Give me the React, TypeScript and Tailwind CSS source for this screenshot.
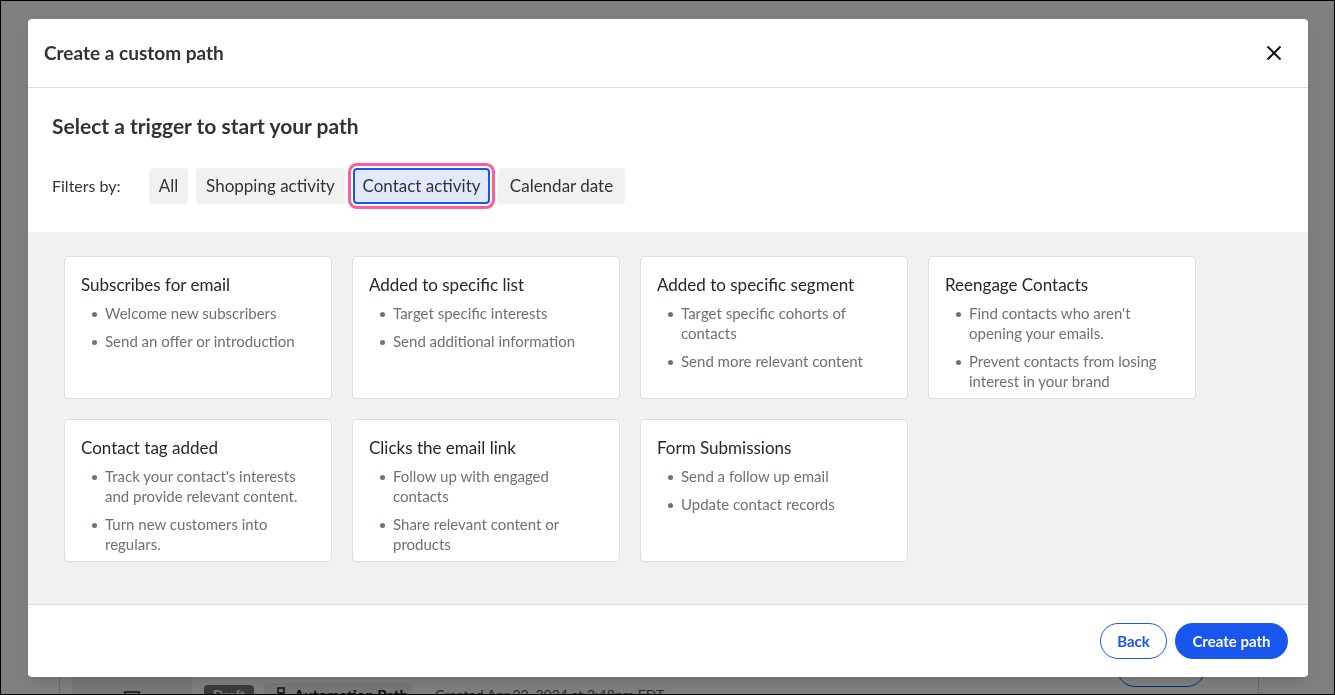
import React from 'react'

const filters = [
    { label: 'All', width: 'min-w-[39px]' },
    { label: 'Shopping activity', width: 'min-w-[149px]' },
    { label: 'Contact activity', width: 'min-w-[137px]' },
    { label: 'Calendar date', width: 'min-w-[127px]' },
]

const triggers = [
    {
        title: 'Subscribes for email',
        points: ['Welcome new subscribers', 'Send an offer or introduction'],
    },
    {
        title: 'Added to specific list',
        points: ['Target specific interests', 'Send additional information'],
    },
    {
        title: 'Added to specific segment',
        points: ['Target specific cohorts of contacts', 'Send more relevant content'],
    },
    {
        title: 'Reengage Contacts',
        points: ["Find contacts who aren't opening your emails.", 'Prevent contacts from losing interest in your brand'],
    },
    {
        title: 'Contact tag added',
        points: ["Track your contact's interests and provide relevant content.", 'Turn new customers into regulars.'],
    },
    {
        title: 'Clicks the email link',
        points: ['Follow up with engaged contacts', 'Share relevant content or products'],
    },
    {
        title: 'Form Submissions',
        points: ['Send a follow up email', 'Update contact records'],
    },
]

function CampaignRow() {
    return (
        <div className="-mb-3 ml-[59px] mr-[76px] flex h-20 items-end border-x border-gray-300 pl-3">
            <div className="flex h-20 w-[120px] items-end justify-center bg-[#f1f1f1]">
                <svg className="h-4 w-4" viewBox="0 0 16 16" fill="none" stroke="#555" strokeWidth="2">
                    <path d="M1 1h14v14H1zM1 4h14" />
                </svg>
            </div>
            <div className="ml-3 flex items-center gap-2.5 text-sm text-[#555]">
                <span className="w-[50px] rounded bg-[#777] text-center leading-5 font-bold text-white">Draft</span>
                <span className="flex w-[148px] items-center gap-2 rounded bg-[#f1f1f1] pl-3 text-[15px] leading-6 font-bold text-[#222]">
                    <svg className="h-4 w-2.5" viewBox="0 0 10 16" fill="none" stroke="#222" strokeWidth="1.5">
                        <path d="M2 1h6v5H2zM5 6v4M2 10h6v5H2z" />
                    </svg>
                    Automation Path
                </span>
                <span className="h-[3px] w-[3px] rounded-full bg-[#555]" />
                <span>Created Apr 22, 2024 at 2:48pm EDT</span>
            </div>
            <button type="button" aria-label="Edit" className="mr-[53px] mb-5 ml-auto h-9 w-[88px] rounded-full border border-[#1856ed]" />
        </div>
    )
}

export default function App() {
    return (
        <div className="flex h-screen flex-col justify-end overflow-hidden bg-white font-['Lato','Noto_Sans',sans-serif]">
            <CampaignRow />

            <div className="fixed inset-0 flex border border-black bg-black/50 pt-[18px] pr-[26px] pb-[17px] pl-[27px]">
                <div
                    role="dialog"
                    aria-labelledby="dialog-title"
                    className="flex min-w-0 flex-1 flex-col overflow-hidden rounded bg-white text-[#333] shadow-lg"
                >
                    <header className="flex h-[69px] shrink-0 items-center justify-between border-b border-[#dedede] pr-6 pl-4">
                        <h1 id="dialog-title" className="text-[19px] font-bold">Create a custom path</h1>
                        <button type="button" aria-label="Close" className="flex h-5 w-5 items-center justify-center">
                            <svg className="h-4 w-4" viewBox="0 0 16 16" fill="none" stroke="#111" strokeWidth="2">
                                <path d="M1.5 1.5l13 13M14.5 1.5l-13 13" />
                            </svg>
                        </button>
                    </header>

                    <section className="shrink-0 px-6 pt-6 pb-7">
                        <h2 className="text-[21px] leading-7 font-bold">Select a trigger to start your path</h2>
                        <div className="mt-7 flex items-center text-[17px]">
                            <span id="filters-label" className="w-[97px] text-base">Filters by:</span>
                            <div role="group" aria-labelledby="filters-label" className="flex gap-2">
                                {filters.map((filter) => {
                                    const active = filter.label === 'Contact activity'
                                    return (
                                        <button
                                            key={filter.label}
                                            type="button"
                                            aria-pressed={active}
                                            className={`h-9 rounded whitespace-nowrap ${filter.width} ${active
                                                ? 'border-2 border-[#1856ed] bg-[#e3e9fd] ring-3 ring-[#ff5ca0] ring-offset-2'
                                                : 'bg-[#f1f1f1]'
                                                }`}
                                        >
                                            {filter.label}
                                        </button>
                                    )
                                })}
                            </div>
                        </div>
                    </section>

                    {/* Trigger cards */}
                    <div className="flex flex-1 flex-wrap content-start gap-5 overflow-y-auto bg-[#f1f1f1] px-9 py-6">
                        {triggers.map((trigger) => (
                            <article
                                key={trigger.title}
                                className="h-[143px] w-[268px] overflow-hidden rounded border border-[#dedede] bg-white p-4"
                            >
                                <h3 className="text-[17px] leading-6 text-[#20292f]">{trigger.title}</h3>
                                <ul className="mt-1.5 space-y-2 pl-[11px] text-[15px] leading-5 text-[#6b7275]">
                                    {trigger.points.map((point) => (
                                        <li key={point} className="flex gap-2">
                                            <span className="mt-[9px] h-[5px] w-[5px] shrink-0 rounded-full bg-[#6b7275]" />
                                            {point}
                                        </li>
                                    ))}
                                </ul>
                            </article>
                        ))}
                    </div>

                    <footer className="flex shrink-0 items-center justify-end gap-2 border-t border-[#dedede] px-5 py-[18px] text-[15px] font-bold">
                        <button type="button" className="h-9 min-w-[67px] rounded-full border border-[#1856ed] text-[#1856ed]">
                            Back
                        </button>
                        <button type="button" className="h-9 min-w-[113px] rounded-full bg-[#1856ed] text-white">
                            Create path
                        </button>
                    </footer>
                </div>
            </div>
        </div>
    )
}
